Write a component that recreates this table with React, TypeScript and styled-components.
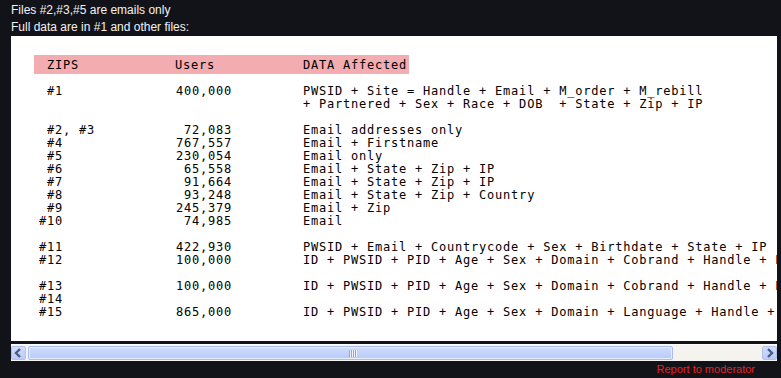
import React from 'react';
import styled, { createGlobalStyle } from 'styled-components';

type Entry = { zip: string; users: string; data: string[] };

const groups: Entry[][] = [
  [
    {
      zip: ' #1',
      users: '400,000',
      data: [
        'PWSID + Site = Handle + Email + M_order + M_rebill',
        '+ Partnered + Sex + Race + DOB  + State + Zip + IP',
      ],
    },
  ],
  [
    { zip: ' #2, #3', users: '72,083', data: ['Email addresses only'] },
    { zip: ' #4', users: '767,557', data: ['Email + Firstname'] },
    { zip: ' #5', users: '230,054', data: ['Email only'] },
    { zip: ' #6', users: '65,558', data: ['Email + State + Zip + IP'] },
    { zip: ' #7', users: '91,664', data: ['Email + State + Zip + IP'] },
    { zip: ' #8', users: '93,248', data: ['Email + State + Zip + Country'] },
    { zip: ' #9', users: '245,379', data: ['Email + Zip'] },
    { zip: '#10', users: '74,985', data: ['Email'] },
  ],
  [
    {
      zip: '#11',
      users: '422,930',
      data: ['PWSID + Email + Countrycode + Sex + Birthdate + State + IP'],
    },
    {
      zip: '#12',
      users: '100,000',
      data: ['ID + PWSID + PID + Age + Sex + Domain + Cobrand + Handle + Email + Zip'],
    },
  ],
  [
    {
      zip: '#13',
      users: '100,000',
      data: ['ID + PWSID + PID + Age + Sex + Domain + Cobrand + Handle + Email + Zip'],
    },
    { zip: '#14', users: '', data: [''] },
    {
      zip: '#15',
      users: '865,000',
      data: ['ID + PWSID + PID + Age + Sex + Domain + Language + Handle + Email'],
    },
  ],
];

function Chevron({ dir }: { dir: 'left' | 'right' }) {
  const d = dir === 'left' ? 'M7 2 L3 6 L7 10' : 'M4 2 L8 6 L4 10';
  return (
    <svg width="11" height="12" viewBox="0 0 11 12">
      <path d={d} fill="none" stroke="#4a5d83" strokeWidth="2.4" />
    </svg>
  );
}

export default function App() {
  return (
    <Page>
      <GlobalStyle />
      <Intro>
        <div>Files #2,#3,#5 are emails only</div>
        <div>Full data are in #1 and other files:</div>
      </Intro>
      <CodeBox>
        <Header>
          <span>ZIPS</span>
          <span>Users</span>
          <span>DATA Affected</span>
        </Header>
        <Groups>
          {groups.map((group, gi) => (
            <div key={gi}>
              {group.map((row) => (
                <Row key={row.zip}>
                  <Zip>{row.zip}</Zip>
                  <Users>{row.users}</Users>
                  <Data>
                    {row.data.map((line, li) => (
                      <div key={li}>{line || '\u00a0'}</div>
                    ))}
                  </Data>
                </Row>
              ))}
            </div>
          ))}
        </Groups>
      </CodeBox>
      <Scrollbar>
        <ArrowButton>
          <Chevron dir="left" />
        </ArrowButton>
        <Thumb>
          <Grip>
            <i />
            <i />
            <i />
            <i />
          </Grip>
        </Thumb>
        <Track />
        <ArrowButton>
          <Chevron dir="right" />
        </ArrowButton>
      </Scrollbar>
      <Footer>
        <ReportLink href="#">Report to moderator</ReportLink>
      </Footer>
    </Page>
  );
}

const GlobalStyle = createGlobalStyle`
  html, body {
    margin: 0;
    background: #121318;
  }
  body {
    font-family: "Liberation Sans", Arial, sans-serif;
  }
`;

const Page = styled.div`
  width: 766px;
  padding-left: 11px;
`;

const Intro = styled.div`
  padding-top: 2px;
  font-size: 12px;
  line-height: 17px;
  color: #f2f2f2;
`;

const CodeBox = styled.div`
  box-sizing: border-box;
  width: 766px;
  height: 305px;
  overflow: hidden;
  background: #fff;
  padding: 19px 0 0 28px;
  font-family: "DejaVu Sans Mono", "Liberation Mono", monospace;
  font-size: 12px;
  letter-spacing: 0.78px;
  color: #000;
`;

const Header = styled.div`
  display: grid;
  grid-template-columns: 128px 128px auto;
  width: fit-content;
  height: 19px;
  line-height: 20px;
  margin-left: -5px;
  padding: 0 2px 0 13px;
  background: #f3acb0;
  white-space: pre;
`;

const Groups = styled.div`
  display: flex;
  flex-direction: column;
  gap: 13px;
  margin-top: 11px;
`;

const Row = styled.div`
  display: grid;
  grid-template-columns: 128px 64px max-content;
  line-height: 13px;
  white-space: pre;
`;

const Zip = styled.span``;

const Users = styled.span`
  text-align: right;
  margin-right: -1px;
`;

const Data = styled.div`
  padding-left: 72px;
`;

const Scrollbar = styled.div`
  box-sizing: border-box;
  display: flex;
  align-items: stretch;
  width: 766px;
  height: 17px;
  margin-top: 3px;
  padding: 1px 0;
  background: #f4f3ee;
  border-top: 1px solid #fdfdfb;
`;

const ArrowButton = styled.div`
  box-sizing: border-box;
  display: flex;
  align-items: center;
  justify-content: center;
  width: 15px;
  background: linear-gradient(#d2ddfc, #b9cbf6);
  border: 1px solid #b0c2ec;
  border-radius: 2px;
`;

const Thumb = styled.div`
  box-sizing: border-box;
  display: flex;
  align-items: center;
  justify-content: center;
  width: 645px;
  margin-left: 2px;
  background: linear-gradient(#d0dcfc, #c3d3fa 50%, #b8cbf6);
  border: 1px solid #a9bdea;
  box-shadow: inset 0 0 0 1px #e6edfd;
  border-radius: 2px;
`;

const Grip = styled.div`
  display: flex;
  gap: 1px;
  margin-left: 4px;
  i {
    display: block;
    width: 1px;
    height: 7px;
    background: #8ea6d8;
    box-shadow: 1px 0 0 #eef3fe;
  }
`;

const Track = styled.div`
  flex: 1;
`;

const Footer = styled.div`
  display: flex;
  justify-content: flex-end;
  padding-right: 22px;
  height: 16px;
  line-height: 16px;
`;

const ReportLink = styled.a`
  font-size: 11px;
  color: #ee1c25;
  text-decoration: none;
`;
